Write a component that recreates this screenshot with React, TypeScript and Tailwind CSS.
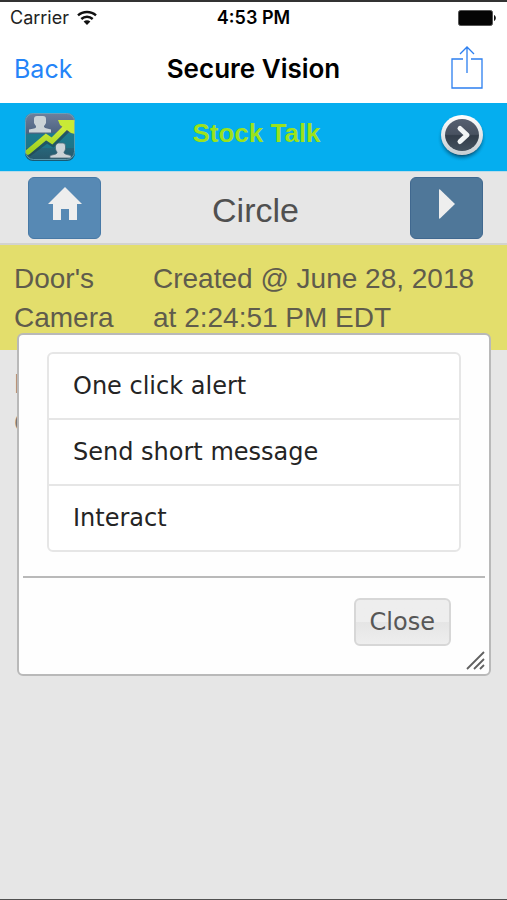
import React from "react";

const actions = ["One click alert", "Send short message", "Interact"];

const devices = [
  {
    name: "Door's Camera",
    detail: "Created @ June 28, 2018 at 2:24:51 PM EDT",
    row: "bg-[#e3de6c] text-[#5f5c4c]",
  },
  { name: "Door's Camera", detail: "", row: "text-[#777777]" },
];

function WifiIcon() {
  return (
    <svg width="20" height="16" viewBox="0 0 20 16" fill="none" stroke="#111" strokeWidth="2.400" aria-hidden="true">
      <path d="M1 5.400C6 .8 14 .8 19 5.400" />
      <path d="M4.300 9c3.300-3 8.100-3 11.400 0" />
      <path d="M6.600 11.500c2-1.800 4.800-1.800 6.800 0L10 15z" fill="#111" stroke="none" />
    </svg>
  );
}

function BatteryIcon() {
  return (
    <svg width="39" height="16" viewBox="0 0 39 16" aria-hidden="true">
      <rect x="0.5" y="0.5" width="34" height="15" rx="2" fill="#050505" stroke="#555" />
      <path d="M36 5c2.400 1 2.400 5 0 6z" fill="#111" />
    </svg>
  );
}

function ShareIcon() {
  return (
    <svg width="32" height="44" viewBox="0 0 32 44" fill="none" stroke="#2c7ff0" strokeWidth="1.300" aria-hidden="true">
      <path d="M12 14H1v29h30V14H20M16 28V2M9 9l7-7 7 7" />
    </svg>
  );
}

function StockLogo() {
  return (
    <svg width="52" height="50" viewBox="0 0 52 50" aria-hidden="true">
      <defs>
        <linearGradient id="logoTop" x1="0" y1="0" x2="0" y2="1">
          <stop offset="0" stopColor="#71819d" />
          <stop offset="0.420" stopColor="#4d6381" />
          <stop offset="0.450" stopColor="#25758b" />
          <stop offset="1" stopColor="#285669" />
        </linearGradient>
        <linearGradient id="logoArrow" x1="0" y1="0" x2="0" y2="1">
          <stop offset="0" stopColor="#d5ef3e" />
          <stop offset="1" stopColor="#9bcf1f" />
        </linearGradient>
        <clipPath id="logoClip">
          <rect x="1" y="1" width="50" height="47" rx="8" />
        </clipPath>
      </defs>
      <rect x="1" y="2" width="50" height="47" rx="8" fill="#175a75" />
      <g clipPath="url(#logoClip)">
        <path d="M0 0h52v50H0z" fill="url(#logoTop)" />
        <path d="M0 24c9-3 13-1 21-2s19-4 31 0v14H0z" fill="#197f91" opacity=".6" />
        <path d="M13 4h6q3 0 3 3v4q-1 2-2 3v1q1 1 3 1.500l4 1v3H5v-3l5-1q2-.5 2-1.500v-1q-1-1-2-3V7q0-3 3-3z" fill="#cbd3d7" />
        <path d="M34 31h5q2.500 0 2.500 3v3q-.5 2-1.500 3v1q1 1 3 1.500l4 1V46H26v-2.500l4-1q2.500-.5 3-1.500v-1q-1-1-1.500-3v-3q0-3 2.500-3z" fill="#cbd3d7" stroke="#466a78" strokeWidth=".8" />
        <path d="M3 39L22 25l6 4 15-15" fill="none" stroke="#21414b" strokeWidth="6" opacity=".6" transform="translate(1 3)" />
        <path d="M4 40L22 25l6 4 15-15" fill="none" stroke="url(#logoArrow)" strokeWidth="5.500" strokeLinecap="round" strokeLinejoin="miter" />
        <path d="M34 8h17v14l-4-1-11-8z" fill="#c9ea36" />
      </g>
      <rect x="1.500" y="1.500" width="49" height="46" rx="8" fill="none" stroke="#6aa8bd" opacity=".8" />
    </svg>
  );
}

function NextIcon() {
  return (
    <svg width="50" height="50" viewBox="0 0 50 50" aria-hidden="true">
      <defs>
        <radialGradient id="nextShadow">
          <stop offset="0.700" stopColor="#063e5c" stopOpacity="0.900" />
          <stop offset="1" stopColor="#00adef" stopOpacity="0" />
        </radialGradient>
        <linearGradient id="nextRim" x1="0" y1="0" x2="0" y2="1">
          <stop offset="0" stopColor="#ffffff" />
          <stop offset="1" stopColor="#c6cdd2" />
        </linearGradient>
        <linearGradient id="nextFace" x1="0" y1="0" x2="0" y2="1">
          <stop offset="0" stopColor="#566071" />
          <stop offset="0.480" stopColor="#485160" />
          <stop offset="0.520" stopColor="#333d4a" />
          <stop offset="1" stopColor="#43515e" />
        </linearGradient>
      </defs>
      <ellipse cx="25" cy="26" rx="25" ry="24" fill="url(#nextShadow)" />
      <ellipse cx="25" cy="23" rx="21" ry="20" fill="url(#nextRim)" />
      <ellipse cx="25" cy="23" rx="17" ry="16" fill="url(#nextFace)" />
      <path d="M23 16.500l7 6.500-7 6.500" fill="none" stroke="#f1f4f5" strokeWidth="5" strokeLinecap="round" strokeLinejoin="round" />
    </svg>
  );
}

function HomeIcon() {
  return (
    <svg width="34" height="34" viewBox="0 0 34 34" fill="#eeeeee" aria-hidden="true">
      <path d="M17 0L0 17h5v16h8V22h8v11h8V17h5z" />
    </svg>
  );
}

function PlayIcon() {
  return (
    <svg width="16" height="30" viewBox="0 0 16 30" fill="#eeeeee" aria-hidden="true">
      <path d="M0 1q0-1 1-.5L16 15 1 29.500q-1 .5-1-.5z" />
    </svg>
  );
}

function ActionDialog() {
  return (
    <div
      role="dialog"
      aria-label="Device actions"
      className="absolute left-[17px] right-4 top-[88px] rounded-md border-2 border-[#b9b9b9] bg-[#fefefe] px-1 pb-7 pt-[17px] font-['DejaVu_Sans','Verdana',sans-serif] text-2xl leading-7"
    >
      <ul className="mx-6 divide-y-2 divide-[#e6e6e6] rounded-md border-2 border-[#e6e6e6] bg-white">
        {actions.map((action) => (
          <li key={action}>
            <button type="button" className="block h-16 w-full px-6 text-left text-[#242424]">
              {action}
            </button>
          </li>
        ))}
      </ul>
      <div className="mt-6 flex justify-end border-t-2 border-[#b9b9b9] pr-[34px] pt-5">
        <button
          type="button"
          className="h-12 rounded-md border-2 border-[#d7d7d7] bg-linear-to-b from-[#eeeeee] from-50% via-[#e5e5e5] via-50% to-[#eeeeee] px-[14px] text-[#575757]"
        >
          Close
        </button>
      </div>
      <svg className="absolute bottom-1 right-1 size-5" viewBox="0 0 20 20" fill="none" stroke="#606060" strokeWidth="1.800" aria-hidden="true">
        <path d="M2 19L19 2M9 19L19 9M15 19l4-4" />
      </svg>
    </div>
  );
}

export default function App() {
  return (
    <div className="flex min-h-screen flex-col border-b border-t-2 border-b-[#505050] border-t-[#333333] bg-[#e6e6e6] font-['Liberation_Sans',Arial,sans-serif]">
      <header className="bg-white font-['Inter','Roboto',sans-serif]">
        <div className="grid h-8 grid-cols-3 items-center px-[10px] text-lg leading-6 text-[#222222]">
          <div className="flex items-center gap-2">
            <span>Carrier</span>
            <WifiIcon />
          </div>
          <time className="text-center font-semibold text-black">4:53 PM</time>
          <div className="flex justify-end">
            <BatteryIcon />
          </div>
        </div>
        <nav className="grid h-[69px] grid-cols-[80px_1fr_80px] items-center px-[14px] text-[26px] leading-8">
          <a href="#back" className="text-[25px] text-[#2484f8]">
            Back
          </a>
          <h1 className="text-center font-semibold text-black">Secure Vision</h1>
          <button type="button" aria-label="Share" className="flex justify-end pb-1 pr-[10px]">
            <ShareIcon />
          </button>
        </nav>
      </header>

      <section className="flex h-[69px] items-center justify-between border-b border-[#b9dce9] bg-[#05aeef] pl-6 pr-5">
        <StockLogo />
        <h2 className="mb-2 text-[26px] font-bold leading-8 text-[#9be21c]">Stock Talk</h2>
        <button type="button" aria-label="Next">
          <NextIcon />
        </button>
      </section>

      <section className="flex h-[73px] items-center justify-between border-b-2 border-[#d3d3cf] pl-7 pr-6">
        <button type="button" aria-label="Home" className="flex h-[62px] w-[73px] items-center justify-center rounded-md border border-[#4779a6] bg-[#5789b4] pb-2">
          <HomeIcon />
        </button>
        <h2 className="pt-1 text-[34px] leading-10 text-[#505050]">Circle</h2>
        <button type="button" aria-label="Play" className="flex h-[62px] w-[73px] items-center justify-center rounded-md border border-[#40688f] bg-[#4f7799] pb-2">
          <PlayIcon />
        </button>
      </section>

      <main className="relative grow">
        <table className="w-full table-fixed text-left text-[28px] leading-[39px]">
          <tbody>
            {devices.map((device, index) => (
              <tr key={index} className={device.row}>
                <td className="h-[105px] w-[139px] pb-3 pl-[14px] pt-[14px] align-top">{device.name}</td>
                <td className="px-[14px] pb-3 pt-[14px] align-top">{device.detail}</td>
              </tr>
            ))}
          </tbody>
        </table>
        <ActionDialog />
      </main>
    </div>
  );
}
